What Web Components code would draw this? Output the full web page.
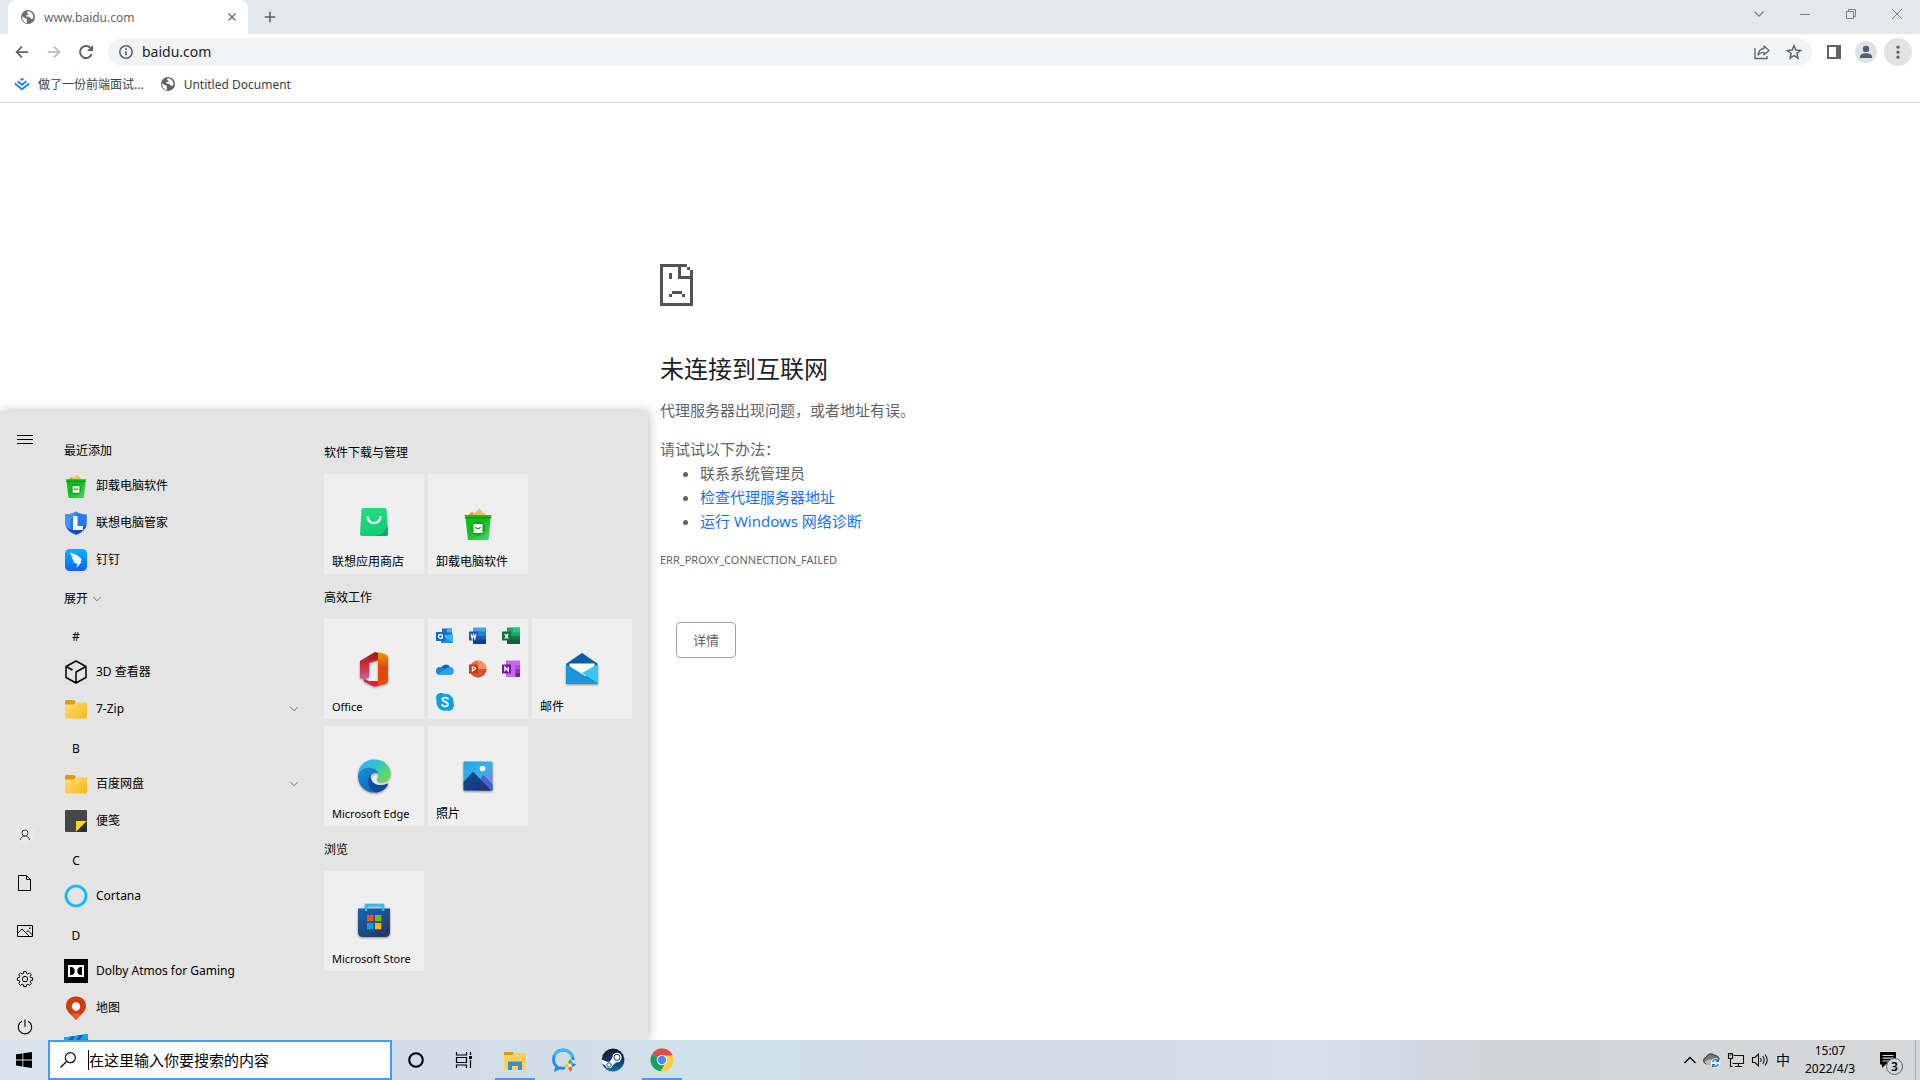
<!DOCTYPE html>
<html lang="zh-CN">
<head>
<meta charset="utf-8">
<title>www.baidu.com</title>
<style>
  html, body { margin: 0; height: 100%; }
  body { font-family: "Noto Sans", "Noto Sans CJK SC", sans-serif; font-size: 12px; color: #000; background: #fff; overflow: hidden; }
</style>
</head>
<body>
<desktop-shell></desktop-shell>
<script>
const ICONS = {
  globe: ['0 0 16 16', '<circle cx="8" cy="8" r="7" fill="currentColor"/><path d="M2.2 7.2 5 9.2c.6.5 1.6.2 1.9.9.2.6-.5 1-.3 1.700.1.6.6.7.6 1.300 0 .5-.2.900-.7.9-2.600-.700-4.600-3-4.300-6.800zM8.500 2.100c-.9.500-1.700 1.100-1.400 1.900.2.700 1.300.4 1.400 1.200.1.7-1 .8-1.800 1-.7.2-.8 1-.2 1.300.9.4 2.500.1 3.300.8.700.6.4 1.300 1.100 1.600.6.200 1.300-.1 2.100-.3 1.100-2.500-.2-5.900-4.500-7.500z" fill="#fff"/>'],
  close: ['0 0 16 16', '<path d="M4 4l8 8M12 4l-8 8" stroke="currentColor" stroke-width="1.6"/>'],
  plus: ['0 0 16 16', '<path d="M8 2v12M2 8h12" stroke="currentColor" stroke-width="1.8"/>'],
  chev: ['0 0 12 12', '<path d="M1.500 3.500 6 8.200l4.500-4.700" fill="none" stroke="currentColor" stroke-width="1.200"/>'],
  chevup: ['0 0 14 14', '<path d="M1.500 10 7 4.500l5.500 5.500" fill="none" stroke="currentColor" stroke-width="1.300"/>'],
  min: ['0 0 10 10', '<path d="M0 5.500h10" stroke="currentColor"/>'],
  restore: ['0 0 10 10', '<path d="M.5 2.500h7v7h-7zM2.500 2.500v-2h7v7h-2" fill="none" stroke="currentColor"/>'],
  x: ['0 0 10 10', '<path d="M0 0l10 10M10 0 0 10" stroke="currentColor"/>'],
  back: ['0 0 16 16', '<path d="M15 8H2.500M8 1.800 1.800 8 8 14.200" fill="none" stroke="currentColor" stroke-width="2"/>'],
  fwd: ['0 0 16 16', '<path d="M1 8h12.500M8 1.800 14.200 8 8 14.200" fill="none" stroke="currentColor" stroke-width="2"/>'],
  reload: ['0 0 16 16', '<path d="M13.700 10A6 6 0 1 1 12.300 3.800" fill="none" stroke="currentColor" stroke-width="2"/><path d="M15 1v6H9z" fill="currentColor"/>'],
  info: ['0 0 16 16', '<circle cx="8" cy="8" r="6.200" fill="none" stroke="currentColor" stroke-width="1.500"/><path d="M8 7.200v4M8 4.300v1.700" stroke="currentColor" stroke-width="1.700"/>'],
  share: ['0 0 16 16', '<path d="M1 4v10.500h12V12" fill="none" stroke="currentColor" stroke-width="1.300"/><path d="M10 2l5 4.500-5 4.300V8.300C7.500 8.300 5.500 9 4 11c.3-3.500 2.300-6 6-6.500z" fill="none" stroke="currentColor" stroke-width="1.300" stroke-linejoin="round"/>'],
  star: ['0 0 16 16', '<path d="M8 1.800l1.800 4.300 4.700.4-3.600 3 1.100 4.600L8 11.700l-4 2.400 1.100-4.600-3.600-3 4.700-.4z" fill="none" stroke="currentColor" stroke-width="1.500"/>'],
  side: ['0 0 14 14', '<path d="M0 0h14v14H0z" fill="currentColor"/><path d="M2 2h7v10H2z" fill="#fff"/>'],
  person: ['0 0 22 22', '<circle cx="11" cy="11" r="11" fill="#dee1e6"/><circle cx="11" cy="7.900" r="3.200" fill="#505d72"/><path d="M5 17v-1.500c0-2.200 3.600-3.200 6-3.200s6 1 6 3.200V17z" fill="#505d72"/>'],
  dots: ['0 0 16 16', '<circle cx="8" cy="3.200" r="1.600" fill="currentColor"/><circle cx="8" cy="8.200" r="1.600" fill="currentColor"/><circle cx="8" cy="13.200" r="1.600" fill="currentColor"/>'],
  juejin: ['0 0 16 16', '<path d="M8 1.800 10 3.400 8 5 6 3.400z" fill="#1e80ff"/><path d="M3.600 5.200 8 8.700l4.400-3.500M.8 7.600 8 13.300l7.200-5.700" fill="none" stroke="#1e80ff" stroke-width="1.900"/>'],
  sad: ['0 0 33 42', '<path d="M0 0h27v3h3v3h3v36H0zM3 3v36h27V15H18V3zM21 3v9h9V6h-3V3z" fill="#535353" fill-rule="evenodd"/><path d="M9 9h3v6H9zM12 27h10v3H12zM9 30h3v3H9zM22 30h3v3h-3z" fill="#535353"/>'],
  menu: ['0 0 16 16', '<path d="M0 3.500h16M0 7.500h16M0 11.500h16" stroke="currentColor"/>'],
  user: ['0 0 20 20', '<circle cx="10" cy="10" r="10" fill="#e9e9e9"/><circle cx="10" cy="8" r="3" fill="none" stroke="#444"/><path d="M5.500 15c.3-2.500 2-4 4.500-4s4.200 1.500 4.500 4" fill="none" stroke="#444"/>'],
  doc: ['0 0 16 16', '<path d="M1.500.5h8l4 4v11h-12zM9.500.5v4h4" fill="none" stroke="currentColor"/>'],
  pic: ['0 0 16 16', '<path d="M.5 2.500h15v11H.5zM1 10l4-4 7.500 7.500M9 9.500l2-2 4.500 4.500" fill="none" stroke="currentColor"/><path d="M12 4.500h1.500V6H12z" fill="currentColor"/>'],
  gear: ['0 0 16 16', '<path d="M6.700.6h2.600l.3 1.900 1.300.5 1.600-1.100 1.800 1.800-1.100 1.600.5 1.300 1.900.3v2.400l-1.900.3-.5 1.300 1.100 1.600-1.800 1.800-1.600-1.100-1.300.5-.3 1.900H6.700l-.3-1.900-1.300-.5-1.600 1.100-1.800-1.800 1.100-1.600-.5-1.300-1.900-.3V6.900l1.900-.3.5-1.300-1.100-1.600 1.800-1.800L5.100 3l1.300-.5z" fill="none" stroke="currentColor"/><circle cx="8" cy="8.100" r="2.700" fill="none" stroke="currentColor"/>'],
  power: ['0 0 16 16', '<path d="M8 .5V8M4.800 2.300a6.700 6.700 0 1 0 6.400 0" fill="none" stroke="currentColor" stroke-width="1.100"/>'],
  uninstall: ['0 0 28 32', '<defs><linearGradient id="g" x2=".8" y2="1"><stop stop-color="#0ac31b"/><stop offset=".5" stop-color="#12bd1c"/><stop offset="1" stop-color="#4ad166"/></linearGradient></defs><path d="M3 8l5-4 3 1 4-4.500 8 7.500z" fill="#edc267"/><path d="M3 8l5-4 3 4z" fill="#d99c2b"/><path d="M.5 7h27l-1 4-2 21H4L1.500 11z" fill="url(#g)"/><path d="M1 9h26v1.500H1.400z" fill="#0a9a18"/><circle cx="14" cy="20.500" r="7.200" fill="#12a61d"/><path d="M9.500 16h9v9h-9z" fill="#fff"/><path d="M11.500 19c1 2.200 4 2.200 5 0" fill="none" stroke="#12a61d" stroke-width="1.400"/>'],
  shield: ['0 0 24 24', '<path d="M12 .5c3.500 2.200 7 3 10.800 3v8.300c0 5.800-4.500 9.700-10.800 12C5.700 21.500 1.200 17.600 1.200 11.800V3.500c3.800 0 7.300-.8 10.800-3z" fill="#2878ef"/><path d="M1.200 11.800V3.500C5 3.500 8.500 2.700 12 .5v3C8 6 6 8 6 12c0 5 1 8 6 11.800C5.700 21.500 1.200 17.600 1.200 11.800z" fill="#4294ff"/><path d="M22.500 14c-1.500 5-5.500 8-10.500 9.800C6 21 4 19 2.500 16c6 5 14 3 20-2z" fill="#154bc5"/><path d="M9 5h4.500v10H19v4H9z" fill="#fff"/>'],
  ding: ['0 0 24 24', '<defs><linearGradient id="g" x2="0" y2="1"><stop stop-color="#00b4ff"/><stop offset="1" stop-color="#0a62ff"/></linearGradient></defs><rect x="1" y="1" width="22" height="22" rx="4.500" fill="url(#g)"/><path d="M6.500 4.500c4.500 1.500 8 3 11 6.500.3.600-.4 2-1.200 3h1.200l-5 6 1-4.500h-1.700c-1.500-.5-2.500-1.500-3-3 1 .4 1.600.4 2 .4-1.700-.9-3-1.900-3.200-3.600.8.400 1.400.6 2 .6C7.800 8.500 6.500 7 6.500 4.500z" fill="#fff"/>'],
  cube: ['0 0 24 24', '<path d="M12 1l10 5.500v11L12 23 2 17.500v-11zM2 6.500 8.500 10M22 6.500 12 12v11" fill="none" stroke="#000" stroke-width="1.500" stroke-linejoin="round"/>'],
  folder: ['0 0 24 24', '<defs><linearGradient id="g" x2="1" y2="1"><stop stop-color="#ffdf7b"/><stop offset="1" stop-color="#f9b712"/></linearGradient></defs><path d="M1 4.500Q1 3 2.500 3H10l1.800 2L10 9H1z" fill="#dd9c0d"/><path d="M1 7.500h8l3-2h11V20q0 1.500-1.500 1.500h-19Q1 21.500 1 20z" fill="url(#g)"/>'],
  sticky: ['0 0 24 24', '<rect x="1" y="1" width="22" height="22" rx="1" fill="#464646"/><path d="M12 12h11L12 23z" fill="#ffd60a"/><path d="M12 23 23 12v10q0 1-1 1z" fill="#2f2f2f"/>'],
  cortana: ['0 0 24 24', '<circle cx="12" cy="12" r="10" fill="none" stroke="#8ad9f8" stroke-width="3.600"/><circle cx="12" cy="12" r="10" fill="none" stroke="#11b4fb" stroke-width="2.200"/>'],
  dolby: ['0 0 24 24', '<path d="M0 0h24v24H0z"/><path d="M4 6h16v12H4z" fill="#fff"/><path d="M6 8h1c5 0 5 8 0 8H6zM18 8h-1c-5 0-5 8 0 8h1z"/>'],
  pin: ['0 0 24 24', '<path d="M12 .5c6 0 10 4 10 9.500 0 6-6 9-10 14C8 19 2 16 2 10 2 4.500 6 .5 12 .5z" fill="#d03c0b"/><path d="M7 18.500c3-1.500 7-1.500 10 0-2 2-3.500 3.500-5 5.500-1.500-2-3-3.500-5-5.500z" fill="#f05a22"/><circle cx="12" cy="10.500" r="4.200" fill="#fff"/>'],
  video: ['0 0 24 24', '<path d="M0 4.500 24 1v22H0z" fill="#1283d3"/><path d="M0 4.500 24 1v5L0 9z" fill="#11a7e9"/><path d="M7 3.500l4-.600-3 5-4 .600zM15 2.300l4-.600-3 5-4 .600z" fill="#0a62b4"/>'],
  store2: ['0 0 28 32', '<defs><linearGradient id="g" x2=".3" y2="1"><stop stop-color="#24df80"/><stop offset="1" stop-color="#13cb74"/></linearGradient></defs><path d="M3 0h22q1.500 0 1.500 1.500L28 26q0 2-2 2H2q-2 0-2-2L1.500 1.500Q1.500 0 3 0z" fill="url(#g)"/><path d="M27.500 18 28 26q0 2-2 2H15c6-1 10-4 12.500-10z" fill="#09ad69"/><path d="M7.500 9c1.500 8 11.500 8 13 0" fill="none" stroke="#fff" stroke-width="2.200" stroke-linecap="round"/>'],
  office: ['0 0 32 36', '<defs><linearGradient id="g" x2="0" y2="1"><stop stop-color="#a31418"/><stop offset=".6" stop-color="#d03542"/><stop offset="1" stop-color="#b968b0"/></linearGradient><linearGradient id="h" x2="0" y2="1"><stop stop-color="#f49b0b"/><stop offset=".45" stop-color="#e34708"/><stop offset="1" stop-color="#e64a0c"/></linearGradient></defs><path d="M2 10 17 1l3 1v7l-9 3v14l-5 2.500-4-1.500z" fill="url(#g)"/><path d="M6 28l5 2h9v5l-4 .500-10-5z" fill="#d81e43"/><path d="M20 1l7 2q3 1 3 4v22q0 3-3 4l-7 2z" fill="url(#h)"/>'],
  mail: ['0 0 34 34', '<path d="M1 12 17 1l16 11v20H1z" fill="#0c5ea8"/><path d="M4.500 11.500h25V24h-25z" fill="#fff"/><path d="M1 12l32 20H1z" fill="#1b94e0"/><path d="M33 12 17 21l16 11z" fill="#37c5f2"/>'],
  outlook: ['0 0 18 18', '<path d="M6 1.500h10V8H6z" fill="#1b6fc0"/><path d="M11 1.500h5v4h-5z" fill="#47b0ee"/><path d="M5 9l12-2v9H5z" fill="#36b5ef"/><path d="M5 16h12L8 9.500z" fill="#1b90df"/><path d="M0 5h9v9H0z" fill="#0f70cb"/><circle cx="4.500" cy="9.500" r="2" fill="none" stroke="#fff" stroke-width="1.300"/>'],
  word: ['0 0 18 18', '<path d="M4 .500h13v5H4z" fill="#41a5ee"/><path d="M4 4.500h13V9H4z" fill="#2b7cd3"/><path d="M4 9h13v4H4z" fill="#185abd"/><path d="M4 12.500h13V17H4z" fill="#103f91"/><path d="M0 4.500h9v9H0z" fill="#1a52ad"/><path d="M2 6.800l1.200 4.700 1.300-4 1.300 4L7 6.800" fill="none" stroke="#fff" stroke-width="1.200"/>'],
  excel: ['0 0 18 18', '<path d="M5 .500h13V17H5z" fill="#21a366"/><path d="M11 .500h7v5h-7z" fill="#33c481"/><path d="M5 9h13v4H5z" fill="#107c41"/><path d="M5 12.500h13V17H5z" fill="#185c37"/><path d="M0 4.500h9v9H0z" fill="#107038"/><path d="M2.800 6.800l3.400 4.700M6.200 6.800l-3.400 4.700" stroke="#fff" stroke-width="1.300"/>'],
  onedrive: ['0 0 18 18', '<path d="M5 8a5 5 0 0 1 9-1l-4 6z" fill="#0a64bd"/><path d="M4 15a4 4 0 0 1 0-8c2 0 3 .5 5 2l4 6z" fill="#1584d8"/><path d="M13 7a4 4 0 0 1 1.500 8H4q-1.500 0-2.500-1z" fill="#28a2ea"/>'],
  ppt: ['0 0 18 18', '<circle cx="9" cy="9" r="8.500" fill="#ed6c47"/><path d="M9 .500A8.500 8.500 0 0 1 17.500 9H9z" fill="#ff8f6b"/><path d="M.5 9h17A8.500 8.500 0 0 1 .5 9z" fill="#d35230"/><path d="M0 4.500h9v9H0z" fill="#c13b1c"/><path d="M3.400 11.800V7h1.500a1.300 1.300 0 0 1 0 2.800H3.400" fill="none" stroke="#fff" stroke-width="1.200"/>'],
  onenote: ['0 0 18 18', '<path d="M4 .500h14V17H4z" fill="#ca64ea"/><path d="M13.500 5H18v4h-4.500z" fill="#ae4bd5"/><path d="M13.500 9H18v4h-4.500z" fill="#9332bf"/><path d="M13.500 13H18v4h-4.500z" fill="#7719aa"/><path d="M0 4.500h9v9H0z" fill="#7116a4"/><path d="M2.900 11.500V7l3.300 4V6.700" fill="none" stroke="#fff" stroke-width="1.200"/>'],
  skype: ['0 0 18 18', '<path d="M5 0c1.500 0 2.500.7 3 .8A8.300 8.300 0 0 1 17.500 10c.8 1.500.6 4-.5 5.500-1.200 2-4 2.800-6.200 2A8.300 8.300 0 0 1 .6 8C-.2 5 0 3 1 1.700 2 .6 3.500 0 5 0z" fill="#0d9fe5"/><path d="M12 6C11 4 6.300 4 6.300 6.500S12 8.400 12 11.300 7 14 6 11.700" fill="none" stroke="#fff" stroke-width="1.800" stroke-linecap="round"/>'],
  edge: ['0 0 34 34', '<defs><linearGradient id="g" x2="1" y2=".6"><stop stop-color="#2fb5e8"/><stop offset=".5" stop-color="#2cc3d2"/><stop offset="1" stop-color="#62dd56"/></linearGradient><linearGradient id="h" x2=".5" y2="1"><stop stop-color="#168fd4"/><stop offset="1" stop-color="#0b6ac4"/></linearGradient></defs><path d="M1 16C1.500 6 9 .500 17.500.500 27 .500 33.500 7 33.500 14.500c0 5.500-4 8.500-8.500 8.500-3.500 0-5.500-1.300-5-2.500.5-1 1.500-1.800 1.500-4.500C21 11.500 17 9 12 9 6 9 2.500 12 1 16z" fill="url(#g)"/><path d="M1 16C2.500 12 6 8.700 11.500 8.700c5 0 8.500 2.300 10 5.800-4-2-8 0-8.500 5-.5 6 5 12 13 11-3 2.500-6 3-9 3C8 33.500.500 26 1 16z" fill="url(#h)"/><path d="M13.500 15.500C9 21 11.500 32 19 33.400c6-.4 10-3.900 12-7.900.3-.9-.4-1.200-1.200-.8C24 27.500 13 27 13.500 15.500z" fill="#124b9b"/>'],
  photos: ['0 0 30 30', '<defs><linearGradient id="g" x2="1" y2="1"><stop stop-color="#1fa4e7"/><stop offset=".5" stop-color="#37b2ea"/><stop offset="1" stop-color="#9c6bd8"/></linearGradient><linearGradient id="h" x2="1" y2="1"><stop stop-color="#10509c"/><stop offset="1" stop-color="#1b2e6c"/></linearGradient></defs><rect x=".5" y=".5" width="29" height="29" rx="1" fill="url(#g)"/><path d="M20 13.500l9.500 10v6H12z" fill="#4463cb"/><path d="M.5 21 9 11.500q1-1 2 0l17 18H1.500q-1 0-1-1z" fill="url(#h)"/><circle cx="19.500" cy="7.500" r="2.800" fill="#fff"/>'],
  msstore: ['0 0 32 36', '<defs><linearGradient id="g" x2=".6" y2="1"><stop stop-color="#0f6ab9"/><stop offset="1" stop-color="#243a6b"/></linearGradient></defs><path d="M0 5.500h32V29q0 5-5 5H5q-5 0-5-5z" fill="url(#g)"/><path d="M8 8V2h17v6" fill="none" stroke="#29c0f5" stroke-width="2.300"/><path d="M9 12h6.300v6.300H9z" fill="#f25022"/><path d="M17 12h6.300v6.300H17z" fill="#7fba00"/><path d="M9 20h6.300v6.300H9z" fill="#00a4ef"/><path d="M17 20h6.300v6.300H17z" fill="#ffb900"/>'],
  win: ['0 0 16 16', '<path d="M0 2.300 6.500 1.400v6H0zM7.300 1.300 16 0v7.400H7.300zM0 8.400h6.500v6L0 13.500zM7.300 8.400H16V16l-8.700-1.300z"/>'],
  search: ['0 0 16 16', '<circle cx="10.300" cy="5.700" r="5" fill="none" stroke="#000" stroke-width="1.200"/><path d="M6.500 9.500.5 15.500" stroke="#000" stroke-width="1.300"/>'],
  ring: ['0 0 16 16', '<circle cx="8" cy="8" r="6.800" fill="none" stroke="#000" stroke-width="2.100"/>'],
  taskview: ['0 0 18 16', '<path d="M1.500 0v3h10V0M1.500 16v-3h10v3M1.500 5.500h10v5h-10zM15.500 0v3M15.500 8v8" fill="none" stroke="#000" stroke-width="1.200"/><path d="M14 4h3v3h-3z"/>'],
  explorer: ['0 0 24 24', '<path d="M1 4h9l1.500 2L10 9H1z" fill="#d9960a"/><path d="M1 7h8l2-2h12v17H1z" fill="#ffd05b"/><path d="M5 22v-8.500h14V22h-4v-4H9v4z" fill="#3b8fd1"/>'],
  wecom: ['0 0 24 24', '<path d="M21 12c0-6-4.500-10-10-10S1.500 6 1.500 11.500c0 3 1.300 5.500 3.300 7L4 21.500l4-1.700c1.500.5 3 .6 5 .2" fill="none" stroke="#1e8cf0" stroke-width="2.800"/><path d="M2.500 8C4 4 7 2.200 11 2.200c5 0 8 3 9 6.800" fill="none" stroke="#46b8f5" stroke-width="2.800"/><path d="M18 11l2.500 3.500L18 16.500l-2-2z" fill="#3ab54a"/><path d="M24.500 16.500l-4 2.500-2-2 2-2z" fill="#2a86ef"/><path d="M18.500 24l-2.500-3.500 2.500-2.500 2 2.500z" fill="#f56428"/><path d="M11.500 18l4-2.500 2.500 2-2.500 2.500z" fill="#fbbe19"/><circle cx="18" cy="17.300" r="1.500" fill="#fff"/>'],
  steam: ['0 0 24 24', '<defs><linearGradient id="g" x2="0" y2="1"><stop stop-color="#13163a"/><stop offset=".5" stop-color="#11315f"/><stop offset="1" stop-color="#1577ad"/></linearGradient></defs><path d="M12 .500a11.500 11.500 0 1 1-11 15L.800 11A11.500 11.500 0 0 1 12 .500z" fill="url(#g)"/><path d="M.6 11.500 8 14.500l4-5.500 4.500-3.300 3.800 3-1.300 5-4 .8-4 3.500-5.500.2L1 15.500z" fill="#fff"/><circle cx="16" cy="9.300" r="4.600" fill="#fff"/><circle cx="16" cy="9.300" r="3" fill="#fff" stroke="#173964"/><circle cx="8" cy="17" r="3.300" fill="#fff"/><circle cx="8" cy="17" r="2.200" fill="none" stroke="#17548a"/>'],
  chrome: ['0 0 24 24', '<path d="M12 12 2 6.200A11.500 11.500 0 0 1 22.600 7.500z" fill="#de4f3f"/><path d="M12 12 2 6.200A11.500 11.500 0 0 0 10.500 23.400L16 15z" fill="#18a05e"/><path d="M12 7.500h10.600A11.500 11.500 0 0 1 10.500 23.400L16 14z" fill="#fecc3f"/><circle cx="12" cy="12" r="5.300" fill="#f1f1f1"/><circle cx="12" cy="12" r="4.200" fill="#4a8af4"/>'],
  cloud: ['0 0 18 16', '<path d="M3.500 12A3.500 3.500 0 0 1 3 5.200 5.500 5.500 0 0 1 12 3.500a4 4 0 0 1 4 4.500v4z" fill="#777" stroke="#333"/><path d="M1.500 10C5 6 9 7 12 9l-3 4H4z" fill="#b8b8b8"/><circle cx="12.500" cy="11" r="4.800" fill="#f4f8fc"/><path d="M9.600 10.200a3 3 0 0 1 5.500-1.200M15.400 11.800a3 3 0 0 1-5.500 1.200M15.300 6.900v2.400h-2.400M9.700 15v-2.400h2.400" fill="none" stroke="#1976d2" stroke-width="1.300"/>'],
  net: ['0 0 18 16', '<path d="M6.500 3.500h10v8H5.500M11.500 11.500v3M8 14.500h7M1.500 1.500h4v5h-4zM3.500 6.500v8h2" fill="none" stroke="#111" stroke-width="1.100"/><path d="M2.500 3h2"  stroke="#111"/>'],
  vol: ['0 0 18 16', '<path d="M1.500 5.500h2.500L7.500 2v12L4 10.500H1.500zM9.500 6q1.500 2 0 4M11.700 4q3 4 0 8M14 2.500q4.500 5.500 0 11" fill="none" stroke="#111" stroke-width="1.100"/>'],
  note: ['0 0 16 16', '<path d="M0 0h16v12.500H5.500L2 16v-3.500H0z"/><path d="M2.500 3.500h11M2.500 6.200h11M2.500 9h7" stroke="#d4d6d8" stroke-width="1.200"/>']
};

/* Base class: clones a template string into an open shadow root. */
class Base extends HTMLElement {
  connectedCallback() {
    if (this.shadowRoot) return;
    const t = document.createElement('template');
    t.innerHTML = `<style>*{box-sizing:border-box}button{font:inherit;color:inherit;background:none;border:0;padding:0;margin:0;text-align:left}a{color:inherit;text-decoration:none}:focus{outline:none}</style>` + this.view();
    this.attachShadow({ mode: 'open' }).append(t.content.cloneNode(true));
  }
  attr(n, d = '') { return this.getAttribute(n) ?? d; }
}
const define = (name, view) => customElements.define(name, class extends Base { view() { return view(this); } });

define('ui-icon', el => {
  const [box, body] = ICONS[el.attr('name')];
  const w = el.attr('w', '16'), h = el.attr('h', w);
  return `<style>:host{display:inline-flex;flex:none}svg{display:block;overflow:visible}:host([lift]) svg{filter:drop-shadow(0 1px 1px rgba(0,0,0,.4))}</style>
  <svg width="${w}" height="${h}" viewBox="${box}" aria-hidden="true">${body}</svg>`;
});

define('icon-button', el => `<style>
  :host{display:block;flex:none}
  button{width:28px;height:28px;display:flex;align-items:center;justify-content:center;border-radius:50%;background:var(--fill,none)}
  :host([caption]) button{width:46px;border-radius:0}
  :host([slim]) button{height:24px;width:24px}
  </style><button type="button" aria-label="${el.attr('label')}"><slot></slot></button>`);

define('browser-tab', () => `<style>
  :host{display:block}
  .tab{width:240px;height:34px;display:flex;align-items:center;gap:8px;padding:0 4px 0 12px;background:#fff;border-radius:8px 8px 0 0;color:#7a7a7a}
  .t{flex:1;font-size:12px;line-height:18px;padding-top:2px;color:#666}
  ui-icon{color:#6e6e6e}
  </style><div class="tab"><ui-icon name="globe"></ui-icon><span class="t"><slot></slot></span><icon-button slim label="关闭"><ui-icon name="close" w="14"></ui-icon></icon-button></div>`);

define('tab-strip', () => `<style>
  :host{display:flex;align-items:center;height:34px;background:#e4e8eb;padding-left:8px;color:#7d7f81}
  .new{padding-left:8px;color:#5f6368;flex:1}
  .caps{display:flex;height:28px;align-self:flex-start}
  </style><browser-tab>www.baidu.com</browser-tab>
  <div class="new"><icon-button label="新标签页"><ui-icon name="plus" w="14"></ui-icon></icon-button></div>
  <div class="caps"><icon-button caption label="搜索标签页"><ui-icon name="chev" w="12"></ui-icon></icon-button><icon-button caption label="最小化"><ui-icon name="min" w="10"></ui-icon></icon-button><icon-button caption label="还原"><ui-icon name="restore" w="10"></ui-icon></icon-button><icon-button caption label="关闭窗口"><ui-icon name="x" w="10"></ui-icon></icon-button></div>`);

define('tool-bar', () => `<style>
  :host{display:flex;align-items:center;gap:4px;height:36px;padding:0 8px;color:#5f6368}
  .box{flex:1;display:flex;align-items:center;height:28px;border-radius:14px;background:#f1f3f4;margin:0 4px;padding:0 4px 0 10px;gap:4px}
  input{flex:1;min-width:0;border:0;background:none;font:14px/20px "Noto Sans",sans-serif;color:#202124;padding:0 0 0 4px}
  .off{color:#babcbe}
  </style>
  <icon-button label="返回"><ui-icon name="back" w="14"></ui-icon></icon-button>
  <icon-button class="off" label="前进"><ui-icon name="fwd" w="14"></ui-icon></icon-button>
  <icon-button label="重新加载"><ui-icon name="reload" w="16"></ui-icon></icon-button>
  <div class="box"><ui-icon name="info"></ui-icon><input aria-label="地址" value="baidu.com">
  <icon-button label="分享"><ui-icon name="share"></ui-icon></icon-button><icon-button label="收藏"><ui-icon name="star"></ui-icon></icon-button></div>
  <icon-button label="侧边栏"><ui-icon name="side" w="14"></ui-icon></icon-button>
  <icon-button label="用户"><ui-icon name="person" w="22"></ui-icon></icon-button>
  <icon-button label="菜单" style="--fill:#e3e3e3"><ui-icon name="dots"></ui-icon></icon-button>`);

define('bookmark-link', el => `<style>
  :host{display:block}a{display:flex;align-items:center;gap:8px;line-height:20px;color:#3c4043}
  span{padding-top:2px}
  ui-icon{color:#5f6368}
  </style><a href="#"><ui-icon name="${el.attr('icon')}"></ui-icon><span><slot></slot></span></a>`);

define('bookmark-bar', () => `<style>
  :host{display:flex;align-items:center;height:33px;padding:0 14px 4px;gap:16px;border-bottom:1px solid #dadce0}
  </style><bookmark-link icon="juejin">做了一份前端面试...</bookmark-link><bookmark-link icon="globe">Untitled Document</bookmark-link>`);

define('error-page', () => `<style>
  :host{display:block;flex:1;font-size:15px;line-height:24px;color:#5f6368}
  main{max-width:600px;margin:0 auto;padding-top:161px}
  ui-icon{display:block;height:42px}
  h1{margin:48px 0 14px;font-size:24px;line-height:30px;font-weight:400;color:#202124}
  p{margin:0 0 15px}
  ul{margin:0;padding-left:40px}
  li a{color:#1a73e8}
  .code{font-size:11px;line-height:18px;margin:18px 0 0}
  button{margin:53px 0 0 16px;width:60px;height:36px;border:1px solid #9aa0a6;border-radius:4px;font-size:13px;line-height:20px;text-align:center;color:#5f6368}
  </style><main>
  <ui-icon name="sad" w="33" h="42"></ui-icon>
  <h1>未连接到互联网</h1>
  <p>代理服务器出现问题，或者地址有误。</p>
  <div>请试试以下办法：</div>
  <ul><li>联系系统管理员</li><li><a href="#">检查代理服务器地址</a></li><li><a href="#">运行 Windows 网络诊断</a></li></ul>
  <div class="code">ERR_PROXY_CONNECTION_FAILED</div>
  <button type="button">详情</button></main>`);

define('app-row', el => `<style>
  :host{display:block}
  button{display:flex;align-items:center;width:100%;height:37px;gap:8px;line-height:18px;padding-bottom:1px}
  .n{flex:1}
  .more{color:#777}
  </style><button type="button"><ui-icon name="${el.attr('icon')}" w="24"></ui-icon><span class="n"><slot></slot></span>${el.hasAttribute('more') ? '<ui-icon class="more" name="chev" w="10"></ui-icon>' : ''}</button>`);

define('letter-row', () => `<style>
  :host{display:block}
  button{display:block;width:24px;height:37px;text-align:center;line-height:18px;padding-top:2px}
  </style><button type="button"><slot></slot></button>`);

define('app-list', () => `<style>
  :host{display:flex;flex-direction:column;gap:1px;padding:20px 15px 0 14px;overflow:hidden}
  section{display:block;flex:none}
  .h{display:flex;align-items:center;height:37px;gap:4px;line-height:18px;padding-top:2px}
  .h ui-icon{color:#777}
  </style>
  <section><div class="h">最近添加</div><app-row icon="uninstall">卸载电脑软件</app-row><app-row icon="shield">联想电脑管家</app-row><app-row icon="ding">钉钉</app-row><button type="button" class="h">展开<ui-icon name="chev" w="10"></ui-icon></button></section>
  <section><letter-row>#</letter-row><app-row icon="cube">3D 查看器</app-row><app-row icon="folder" more>7-Zip</app-row></section>
  <section><letter-row>B</letter-row><app-row icon="folder" more>百度网盘</app-row><app-row icon="sticky">便笺</app-row></section>
  <section><letter-row>C</letter-row><app-row icon="cortana">Cortana</app-row></section>
  <section><letter-row>D</letter-row><app-row icon="dolby">Dolby Atmos for Gaming</app-row><app-row icon="pin">地图</app-row><app-row icon="video"></app-row></section>`);

define('app-tile', el => `<style>
  :host{display:block}
  button{display:grid;width:100px;height:100px;background:#efefef;padding:0}
  .i{grid-area:1/1;place-self:center}
  .l{grid-area:1/1;place-self:end start;padding:0 0 3px 8px;line-height:18px;white-space:nowrap;font-size:var(--tile-size,12px)}
  </style><button type="button"><ui-icon class="i" ${el.hasAttribute('lift') ? 'lift' : ''} name="${el.attr('icon')}" w="${el.attr('w')}" h="${el.attr('h')}"></ui-icon><span class="l"><slot></slot></span></button>`);

define('folder-tile', () => `<style>
  :host{display:block}
  button{display:grid;grid-template-columns:repeat(3,18px);grid-auto-rows:18px;gap:15px;align-content:start;width:100px;height:100px;background:#efefef;padding:8px}
  </style><button type="button" aria-label="Office">${['outlook','word','excel','onedrive','ppt','onenote','skype'].map(n => `<ui-icon name="${n}" w="18"></ui-icon>`).join('')}</button>`);

define('tile-group', el => `<style>
  :host{display:block}
  h2{margin:0;font-size:12px;font-weight:400;line-height:43px;padding-top:2px}
  div{display:grid;grid-template-columns:repeat(3,100px);gap:7px 4px}
  </style><h2>${el.attr('heading')}</h2><div><slot></slot></div>`);

define('start-menu', () => `<style>
  :host{display:grid;grid-template-columns:50px 264px 1fr;width:648px;height:629px;background:#e4e4e4;box-shadow:1px 0 10px rgba(0,0,0,.25);overflow:hidden}
  nav{display:flex;flex-direction:column;align-items:center;gap:24px;padding:17px 0 1px}
  .sp{flex:1}
  .tiles{padding:18px 0 0 10px}
  .latin{--tile-size:11px}
  </style>
  <nav><icon-button slim label="开始"><ui-icon name="menu"></ui-icon></icon-button><span class="sp"></span>
  <icon-button slim label="用户"><ui-icon name="user" w="20"></ui-icon></icon-button><icon-button slim label="文档"><ui-icon name="doc"></ui-icon></icon-button><icon-button slim label="图片"><ui-icon name="pic"></ui-icon></icon-button><icon-button slim label="设置"><ui-icon name="gear"></ui-icon></icon-button><icon-button slim label="电源"><ui-icon name="power"></ui-icon></icon-button></nav>
  <app-list></app-list>
  <div class="tiles">
  <tile-group heading="软件下载与管理"><app-tile icon="store2" w="28" h="32">联想应用商店</app-tile><app-tile icon="uninstall" w="28" h="32">卸载电脑软件</app-tile></tile-group>
  <tile-group heading="高效工作"><app-tile class="latin" lift icon="office" w="32" h="36">Office</app-tile><folder-tile></folder-tile><app-tile lift icon="mail" w="34" h="34">邮件</app-tile><app-tile class="latin" lift icon="edge" w="34" h="34">Microsoft Edge</app-tile><app-tile lift icon="photos" w="30" h="30">照片</app-tile></tile-group>
  <tile-group heading="浏览"><app-tile class="latin" lift icon="msstore" w="32" h="36">Microsoft Store</app-tile></tile-group>
  </div>`);

define('task-button', el => `<style>
  :host{display:block}
  button{width:48px;height:40px;display:grid;place-items:center;background:linear-gradient(var(--bar,transparent),var(--bar,transparent)) 50% 100%/40px 2px no-repeat}
  :host([open]){--bar:#429cff}
  </style><button type="button" aria-label="${el.attr('label')}"><ui-icon name="${el.attr('icon')}" w="${el.attr('w', '24')}" h="${el.attr('h', el.attr('w', '24'))}"></ui-icon></button>`);

define('search-box', () => `<style>
  :host{display:flex;align-items:center;width:344px;height:40px;border:2px solid #429cff;background:#fff;padding-left:10px}
  i{width:1px;height:20px;background:#000;margin-left:12px;flex:none}
  input{flex:1;min-width:0;border:0;padding:0;background:none;font:15px/24px "Noto Sans CJK SC",sans-serif;color:#000}
  input::placeholder{color:#000;opacity:1}
  </style><ui-icon name="search" w="16"></ui-icon><i></i><input aria-label="搜索" placeholder="在这里输入你要搜索的内容">`);

define('system-tray', () => `<style>
  :host{display:flex;align-items:center;height:40px}
  .icons{display:flex;align-items:center;gap:6px}
  .ime{font-size:14px;line-height:20px;width:16px;text-align:center}
  time{width:70px;text-align:center;font-size:12px;line-height:18px;margin-left:4px}
  .n{position:relative;width:46px;height:40px;display:grid;place-items:center}
  .b{position:absolute;right:8px;bottom:5px;width:17px;height:17px;border:1px solid #666;border-radius:50%;background:#d4d6d8;font-size:12px;font-weight:600;line-height:15px;text-align:center}
  hr{border:0;border-left:1px solid #a9abad;width:5px;height:40px;margin:0 0 0 4px}
  </style><div class="icons"><ui-icon name="chevup" w="14"></ui-icon><ui-icon name="cloud" w="18" h="16"></ui-icon><ui-icon name="net" w="18" h="16"></ui-icon><ui-icon name="vol" w="18" h="16"></ui-icon><span class="ime">中</span></div>
  <time>15:07<br>2022/4/3</time>
  <button type="button" class="n" aria-label="通知"><ui-icon name="note" w="16"></ui-icon><span class="b">3</span></button><hr>`);

define('task-bar', () => `<style>
  :host{display:flex;align-items:center;height:40px;flex:none;background:linear-gradient(90deg,#dae4ed 0,#d2dce6 20%,#d0dee8 32%,#cfe2e8 37%,#cfdce5 46%,#d0dde7 60%,#d5e2ec 68%,#d0d7e0 74%,#d2d4d9 79%,#d3d5d6 84%,#d5d7d9 100%)}
  .apps{display:flex;gap:1px;padding-left:3px;flex:1}
  </style>
  <task-button icon="win" w="16" label="开始"></task-button><search-box></search-box>
  <task-button icon="ring" w="16" label="Cortana"></task-button><task-button icon="taskview" w="18" h="16" label="任务视图"></task-button>
  <div class="apps"><task-button open icon="explorer" label="文件资源管理器"></task-button><task-button icon="wecom" label="企业微信"></task-button><task-button icon="steam" label="Steam"></task-button><task-button open icon="chrome" label="Chrome"></task-button></div>
  <system-tray></system-tray>`);

define('browser-window', () => `<style>:host{display:flex;flex-direction:column;flex:1;min-height:0;background:#fff}</style>
  <tab-strip></tab-strip><tool-bar></tool-bar><bookmark-bar></bookmark-bar><error-page></error-page>`);

define('desktop-shell', () => `<style>
  :host{display:flex;flex-direction:column;height:100vh;position:relative}
  start-menu{position:absolute;left:0;bottom:40px}
  task-bar{position:relative}
  </style><browser-window></browser-window><start-menu></start-menu><task-bar></task-bar>`);
</script>
</body>
</html>
